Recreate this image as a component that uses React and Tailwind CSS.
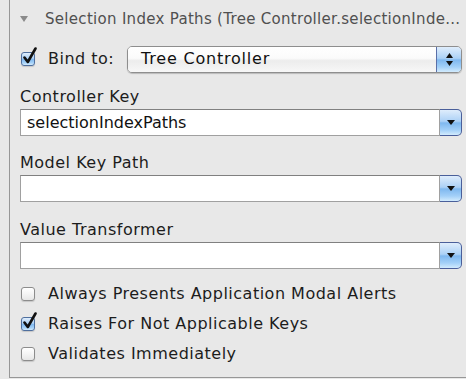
import React from "react";

const aquaBlue =
  "bg-[linear-gradient(to_bottom,#dfedfc_0%,#acd1f6_45%,#7fb8ef_52%,#a3d0f8_80%,#d2ebfd_100%)]";

function CheckBox({ checked }) {
  return (
    <div className="relative w-[14px] h-[14px] shrink-0">
      <div
        className={`w-[14px] h-[14px] rounded-[3px] border shadow-[0_1px_1px_rgba(0,0,0,0.15)] ${
          checked
            ? `border-[#4f6f9e] ${aquaBlue}`
            : "border-[#8c8c8c] bg-[linear-gradient(to_bottom,#ffffff_0%,#f4f4f4_50%,#e6e6e6_100%)]"
        }`}
      />
      {checked && (
        <svg
          className="absolute left-[1px] top-[-5px]"
          width="15"
          height="18"
          viewBox="0 0 15 18"
        >
          <path
            d="M2.5 10.5 L5.8 15 L13.5 1.5"
            fill="none"
            stroke="#111"
            strokeWidth="2.6"
            strokeLinecap="round"
            strokeLinejoin="round"
          />
        </svg>
      )}
    </div>
  );
}

function ComboBox({ value }) {
  return (
    <div className="flex h-[27px] w-[442px]">
      <div className="flex-1 flex items-center bg-white border border-[#a0a0a0] border-t-[#808080] pl-[6px] text-[16px] text-[#111]">
        {value}
      </div>
      <div
        className={`w-[22px] flex items-center justify-center rounded-r-[5px] border border-l-0 border-[#4a5f9a] ${aquaBlue}`}
      >
        <svg width="8" height="6" viewBox="0 0 8 6">
          <path d="M0 0 H8 L4 5 Z" fill="#111" />
        </svg>
      </div>
    </div>
  );
}

function Label({ children, className = "" }) {
  return (
    <div
      className={`h-[16px] leading-[16px] text-[16px] tracking-[0.5px] text-[#1c1c1c] whitespace-nowrap ${className}`}
    >
      {children}
    </div>
  );
}

export default function App() {
  return (
    <div className="w-[466px] h-[379px] bg-[#e8e8e8] font-['DejaVu_Sans','Lucida_Grande',sans-serif] overflow-hidden">
      <div className="ml-[9px] h-[378px] border-l border-b border-[#979797] pl-[10px]">
        {/* Header */}
        <div className="h-[38px] flex items-center">
          <svg width="8" height="6" viewBox="0 0 8 6">
            <path d="M0 0 H8 L4 6 Z" fill="#8a8a8a" />
          </svg>
          <span className="ml-[17px] text-[15px] tracking-[0.3px] text-[#505050] whitespace-nowrap">
            Selection Index Paths (Tree Controller.selectionInde...
          </span>
        </div>

        {/* Bind to */}
        <div className="mt-[7px] h-[28px] flex items-center">
          <div className="ml-[1px]">
            <CheckBox checked />
          </div>
          <span className="ml-[13px] w-[65px] text-[16px] tracking-[0.5px] text-[#1c1c1c] whitespace-nowrap">
            Bind to:
          </span>
          <div className="ml-[14px] flex h-[27px] w-[335px] rounded-[5px] border border-[#8e8e8e] overflow-hidden shadow-[0_1px_1px_rgba(0,0,0,0.2)]">
            <div className="flex-1 flex items-center pl-[13px] text-[16px] tracking-[0.8px] text-[#111] bg-[linear-gradient(to_bottom,#ffffff_0%,#fbfbfb_45%,#ececec_55%,#f7f7f7_100%)]">
              Tree Controller
            </div>
            <div
              className={`w-[25px] flex flex-col items-center justify-center gap-[3px] border-l border-[#5a6fa8] ${aquaBlue}`}
            >
              <svg width="7" height="5" viewBox="0 0 7 5">
                <path d="M3.5 0 L7 5 H0 Z" fill="#111" />
              </svg>
              <svg width="7" height="5" viewBox="0 0 7 5">
                <path d="M0 0 H7 L3.5 5 Z" fill="#111" />
              </svg>
            </div>
          </div>
        </div>

        {/* Controller Key */}
        <Label className="mt-[16px]">Controller Key</Label>
        <div className="mt-[4px]">
          <ComboBox value="selectionIndexPaths" />
        </div>

        <Label className="mt-[19px]">Model Key Path</Label>
        <div className="mt-[4px]">
          <ComboBox value="" />
        </div>

        <Label className="mt-[20px]">Value Transformer</Label>
        <div className="mt-[4px]">
          <ComboBox value="" />
        </div>

        {/* Options */}
        <div className="mt-[18px] flex flex-col gap-[16px]">
          {[
            ["Always Presents Application Modal Alerts", false],
            ["Raises For Not Applicable Keys", true],
            ["Validates Immediately", false],
          ].map(([label, checked]) => (
            <div key={label} className="h-[14px] flex items-center">
              <div className="ml-[1px]">
                <CheckBox checked={checked} />
              </div>
              <span className="ml-[13px] text-[16px] tracking-[0.5px] text-[#1c1c1c] whitespace-nowrap">
                {label}
              </span>
            </div>
          ))}
        </div>
      </div>
    </div>
  );
}
